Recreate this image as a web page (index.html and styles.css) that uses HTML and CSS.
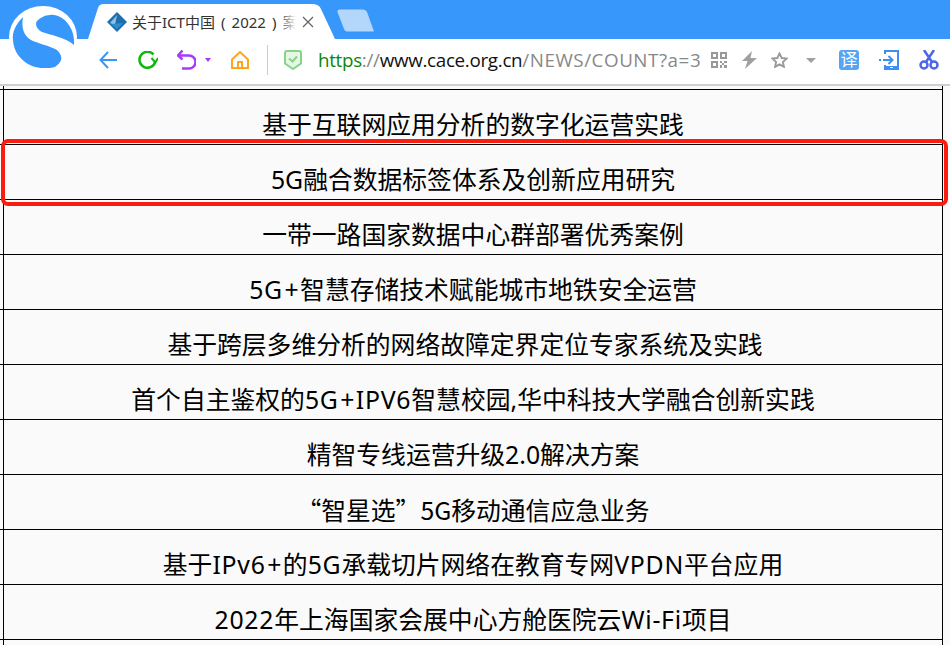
FILE: index.html
```html
<!DOCTYPE html>
<html lang="zh-CN">
<head>
<meta charset="utf-8">
<title>关于ICT中国（2022）案例</title>
<link rel="stylesheet" href="styles.css">
</head>
<body>
<div class="browser">
  <svg class="logo" width="68" height="68" viewBox="9 3 68 68">
    <ellipse cx="43" cy="37" rx="34" ry="31" fill="#fff"/>
    <path d="M50 15C62 13 76 28 74 45 65 37 50 35 42 32 36 29 35 23 37 21 40 18 45 15 50 15z" fill="#3797fb"/>
    <path d="M23 17C15 25 12 33 13 40 14 58 30 68 43 68 48 68 52 68 55 67 62 62 64 57 57 50 50 46 37 43 31 40 24 36 21 28 23 17z" fill="#3797fb"/>
  </svg>
  <div class="tabbar">
    <div class="tab">
      <svg class="favicon" width="20" height="20" viewBox="0 0 20 20">
        <path d="M10 0l10 10-10 10L0 10z" fill="#1d6fae"/>
        <path d="M10 3L3 11l5 2z" fill="#8cc4e8"/>
        <path d="M4 12l12-1-6 6z" fill="#2c8fd0"/>
      </svg>
      <span class="tab-title">关于ICT中国 ( 2022 ) 案</span>
      <span class="tab-fade"></span>
      <svg class="tab-close" width="12" height="12" viewBox="0 0 12 12"><path d="M1 1l10 10M11 1L1 11" stroke="#666" stroke-width="1.3" fill="none"/></svg>
    </div>
    <svg class="newtab" width="38" height="23" viewBox="0 0 38 23"><path d="M3 .5H26Q29 .5 30 3L37 22.500H10Q8 22.500 7 20L.5 3Q0 .5 3 .5z" fill="#b3d6fb"/></svg>
  </div>
  <div class="toolbar">
    <svg class="i-back" width="18" height="18" viewBox="0 0 18 18"><path d="M18 9H1.500M9 1L1.500 9 9 17" stroke="#3c96f8" stroke-width="2" fill="none"/></svg>
    <svg class="i-reload" width="20" height="18" viewBox="0 0 20 18"><path d="M15.500 3.500A8 8 0 1 0 17.300 10.500" stroke="#0cb80c" stroke-width="2.500" fill="none"/><path d="M13.500 7l3.800 4.500L20 7" stroke="#0cb80c" stroke-width="2" fill="none"/></svg>
    <svg class="i-undo" width="19" height="20" viewBox="0 0 19 20"><path d="M2 5.500H12A6.500 6.500 0 0 1 12 18.500H5" stroke="#a53df6" stroke-width="2.500" fill="none"/><path d="M5.500 .5L1 5.500l4.500 4" stroke="#a53df6" stroke-width="2.500" fill="none"/></svg>
    <svg class="i-undo-caret" width="6" height="4" viewBox="0 0 6 4"><path d="M0 0h6L3 4z" fill="#a53df6"/></svg>
    <svg class="i-home" width="18" height="18" viewBox="0 0 18 18"><path d="M1 8.500L9 1l8 7.500V17H1zM7 17v-6h4v6" stroke="#ffa61a" stroke-width="2" fill="none"/></svg>
    <span class="divider"></span>
    <svg class="shield" width="18" height="20" viewBox="0 0 18 20"><path d="M3 1H15Q17 1 17 3V13.500L9 19 1 13.500V3Q1 1 3 1z" fill="#e6f7e6" stroke="#86d486" stroke-width="2"/><path d="M5 8.500l3.500 3L13 6.500" stroke="#86d486" stroke-width="2" fill="none"/></svg>
    <div class="url"><span class="scheme">https</span><span class="sep">://</span><span class="host">www.cace.org.cn</span><span class="path">/NEWS/COUNT?a=3</span></div>
    <svg class="i-qr" width="16" height="16" viewBox="0 0 16 16"><path d="M1 1h5v5H1zM10 1h5v5h-5zM1 10h5v5H1z" fill="none" stroke="#999" stroke-width="2"/><path d="M9 9h2v2H9zM13 9h3v2h-3zM11 11h2v2h-2zM9 13h2v3H9zM13 13h3v3h-3z" fill="#999"/></svg>
    <svg class="i-bolt" width="15" height="18" viewBox="0 0 15 18"><path d="M10 0L0 10h5.500L3 18 15 7H8.500z" fill="#a0a0a0"/></svg>
    <svg class="i-star" width="17" height="16" viewBox="0 0 18 17"><path d="M9 1.500l2.300 4.900 5.200.6-3.900 3.600 1.100 5.200L9 13.200l-4.700 2.600 1.100-5.200L1.500 7l5.200-.6z" fill="none" stroke="#999" stroke-width="2"/></svg>
    <svg class="i-caret" width="10" height="5" viewBox="0 0 10 5"><path d="M0 0h10L5 5z" fill="#a0a0a0"/></svg>
    <span class="translate">译</span>
    <svg class="i-send" width="20" height="20" viewBox="0 0 20 20"><path d="M6 4V1H19V19H6V15" stroke="#3c8ef0" stroke-width="2" fill="none"/><path d="M6 16H20V20H6z" fill="#3c8ef0"/><path d="M0 10h2M4 10h9M9.500 6l4 4-4 4" stroke="#3c8ef0" stroke-width="2" fill="none"/><path d="M11 17.500h3" stroke="#fff" stroke-width="1"/></svg>
    <svg class="i-cut" width="20" height="20" viewBox="0 0 20 20"><circle cx="5" cy="15" r="3.500" fill="none" stroke="#4c66e8" stroke-width="2.500"/><circle cx="15" cy="15" r="3.500" fill="none" stroke="#4c66e8" stroke-width="2.500"/><path d="M5 0l8 12M15 0L7 12" stroke="#4c66e8" stroke-width="2.500" fill="none"/></svg>
  </div>
</div>
<main class="page">
  <div class="gap"></div>
  <div class="row"><div class="cell">基于互联网应用分析的数字化运营实践</div></div>
  <div class="row"><div class="cell">5G融合数据标签体系及创新应用研究</div></div>
  <div class="row"><div class="cell">一带一路国家数据中心群部署优秀案例</div></div>
  <div class="row"><div class="cell"><span class="lat">5G</span><span class="plus">+</span>智慧存储技术赋能城市地铁安全运营</div></div>
  <div class="row"><div class="cell trail">基于跨层多维分析的网络故障定界定位专家系统及实践</div></div>
  <div class="row"><div class="cell">首个自主鉴权的<span class="lat">5G</span><span class="plus">+</span><span class="lat">IPV6</span>智慧校园,华中科技大学融合创新实践</div></div>
  <div class="row"><div class="cell">精智专线运营升级2.0解决方案</div></div>
  <div class="row"><div class="cell cjk">“智星选”5G移动通信应急业务</div></div>
  <div class="row"><div class="cell">基于<span class="lat">IPv6</span><span class="plus">+</span>的<span class="lat">5G</span>承载切片网络在教育专网<span class="lat">VPDN</span>平台应用</div></div>
  <div class="row"><div class="cell"><span class="lat">2022</span>年上海国家会展中心方舱医院云<span class="lat">Wi-Fi</span>项目</div></div>
  <div class="row"><div class="gap"></div></div>
  <div class="highlight"></div>
</main>
</body>
</html>
```
FILE: styles.css
```css
* { box-sizing: border-box; }
html, body { margin: 0; height: 645px; overflow: hidden; }
body { background: #fafafa; font-family: "Noto Sans", "Noto Sans CJK SC", "Liberation Sans", sans-serif; }
.browser { position: relative; height: 86px; background: #fff; border-bottom: 2px solid #cfcfcf; }
.logo { position: absolute; left: 9px; top: 3px; z-index: 2; }
.tabbar { height: 39px; background: #3797fb; padding: 4px 0 0 88px; display: flex; align-items: flex-end; }
.tab { position: relative; flex: none; width: 247px; height: 35px; background: #fff; display: flex; align-items: center; padding: 0 0 0 19px; clip-path: path('M0 35 L10 4 Q11 0 16 0 H224 Q231 0 233 5 L247 35 Z'); }
.favicon { flex: none; margin-right: 5px; }
.tab-title { font-size: 15px; word-spacing: 2.2px; color: #333; white-space: nowrap; width: 172px; }
.tab-fade { position: absolute; left: 191px; top: 0; width: 20px; height: 35px; background: linear-gradient(90deg, rgba(255,255,255,0), #fff 85%); }
.tab-close { position: absolute; left: 214px; top: 12px; }
.newtab { flex: none; margin: 0 0 7px 2px; }
.toolbar { height: 45px; display: flex; align-items: center; padding: 0 0 3px 99px; }
.toolbar svg { flex: none; display: block; }
.i-reload { margin-left: 21px; }
.i-undo { margin-left: 19px; }
.i-undo-caret { margin-left: 9px; }
.i-home { margin-left: 20px; }
.divider { flex: none; width: 1px; height: 30px; background: #ccc; margin: 0 16px 0 18px; }
.url { flex: none; font-family: "Open Sans", "Liberation Sans", sans-serif; font-size: 18.8px; margin-left: 16px; white-space: nowrap; width: 393px; overflow: hidden; }
.scheme { color: #0a870a; letter-spacing: -.3px; }
.sep { color: #888; letter-spacing: -.3px; }
.host { color: #111; letter-spacing: -.3px; }
.path { color: #888; letter-spacing: .55px; }
.i-bolt { margin-left: 15px; }
.i-star { margin-left: 14px; }
.i-caret { margin-left: 18px; }
.translate { flex: none; margin-left: 23px; width: 20px; height: 20px; border-radius: 3px; background: #56a5f5; color: #fff; font-size: 17px; line-height: 20px; text-align: center; }
.i-send { margin-left: 20px; }
.i-cut { margin-left: 20px; }
.page { position: relative; height: 559px; overflow: hidden; }
.gap { height: 3px; margin-left: 3px; width: 940px; border: solid #000; border-width: 0 1px; }
.row { width: 943px; border-top: 1px solid #000; }
.row .gap { height: 20px; }
.cell { margin-left: 3px; height: 54px; border: solid #000; border-width: 0 1px; text-align: center; font-size: 24.8px; line-height: 40px; padding-top: 14px; color: #000; white-space: nowrap; }
.cell.cjk { font-family: "Noto Sans CJK SC", sans-serif; }
.lat { letter-spacing: .75px; }
.plus { margin: 0 1.5px; }
.trail { padding-right: 16px; }
.highlight { position: absolute; left: 1px; top: 53px; width: 947px; height: 67px; border: 4px solid #f91c10; border-radius: 7px; }
```
